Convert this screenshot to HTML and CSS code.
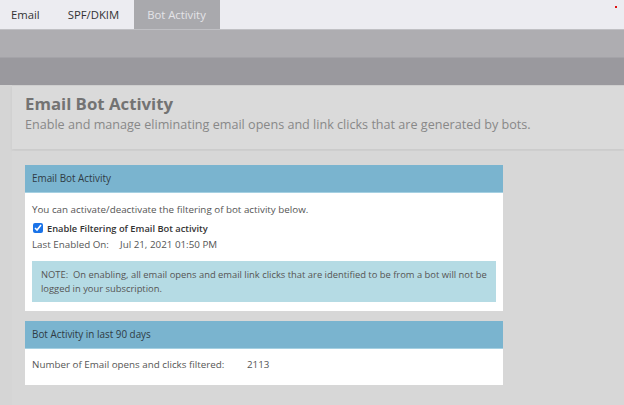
FILE: index.html
```html
<!DOCTYPE html>
<html>
<head>
<meta charset="utf-8">
<link rel="stylesheet" href="styles.css">
</head>
<body>
<div class="tabbar">
  <div class="tab">Email</div>
  <div class="tab">SPF/DKIM</div>
  <div class="tab active">Bot Activity</div>
  <span class="dot"></span>
</div>
<div class="band1"></div>
<div class="band2"></div>
<div class="main">
  <div class="pagehead">
    <h1>Email Bot Activity</h1>
    <p>Enable and manage eliminating email opens and link clicks that are generated by bots.</p>
  </div>
  <div class="content">
    <div class="card">
      <div class="card-h">Email Bot Activity</div>
      <div class="card-b">
        <div class="line">You can activate/deactivate the filtering of bot activity below.</div>
        <label class="chk"><input type="checkbox" checked><b>Enable Filtering of Email Bot activity</b></label>
        <div class="line"><span class="lbl">Last Enabled On:</span>Jul 21, 2021 01:50 PM</div>
        <div class="note">NOTE:&nbsp; On enabling, all email opens and email link clicks that are identified to be from a bot will not be logged in your subscription.</div>
      </div>
    </div>
    <div class="card">
      <div class="card-h">Bot Activity in last 90 days</div>
      <div class="card-b b2">
        <div class="line"><span class="lbl2">Number of Email opens and clicks filtered:</span>2113</div>
      </div>
    </div>
  </div>
</div>
</body>
</html>
```
FILE: styles.css
```css
html, body { margin: 0; padding: 0; }
body {
  width: 624px; height: 405px; overflow: hidden;
  font-family: "Open Sans", sans-serif;
  background: #d7d7d7;
  color: #555;
}
.tabbar {
  height: 29px; background: #ececf1; display: flex; position: relative;
}
.tab {
  font-size: 11.3px; color: #333; line-height: 29px; padding: 0 14px 0 11px;
}
.tab + .tab { padding-left: 14px; }
.tab.active { background: #a9a9ad; color: #e4e4e8; margin-left: 1px; padding: 0 14px 0 13px; }
.dot { position: absolute; right: 7px; top: 6px; width: 2px; height: 2px; background: #e01010; }
.band1 { height: 28px; background: #aeadb1; border-top: 1px solid #c0c0c4; box-sizing: border-box; }
.band2 { height: 28px; background: #9a999e; border-top: 1px solid #a4a3a8; box-sizing: border-box; }
.main { padding-left: 12px; background: #d5d5d5; }
.pagehead {
  background: #dadada; padding: 7px 13px 15px;
  border-top: 1px solid #cfcfcf;
  box-shadow: 0 2px 3px rgba(0,0,0,0.05);
}
h1 { margin: 0; font-size: 16.8px; font-weight: 700; color: #737373; line-height: 22px; }
.pagehead p { margin: 0; font-size: 12.6px; color: #888; line-height: 19px; }
.content { padding: 14px 13px 20px; background: #d7d7d7; margin-top: 2px; }
.card { width: 478px; background: #fff; margin-bottom: 10px; }
.card-h {
  background: #7ab4cf; height: 27px; line-height: 27px; padding: 0 7px;
  font-size: 9.9px; color: #2f3b44; border-bottom: 1px solid #a5d0e2;
}
.card-b { padding: 9px 7px 9px; font-size: 9.8px; }
.line { line-height: 16px; margin-bottom: 2px; }
.chk { display: flex; align-items: center; font-size: 9.3px; color: #333; height: 16px; margin-bottom: 1px; }
.chk b { font-weight: 600; }
.chk input { width: 10px; height: 10px; margin: 0 4px 0 1px; accent-color: #1a73e8; }
.lbl { display: inline-block; width: 88px; }
.lbl2 { display: inline-block; width: 215px; }
.note {
  background: #b5dbe4; margin-top: 8px; padding: 7px 9px 6px; line-height: 14px; font-size: 9.4px; color: #555;
}
.b2 { padding: 8px 7px 10px; }
```
